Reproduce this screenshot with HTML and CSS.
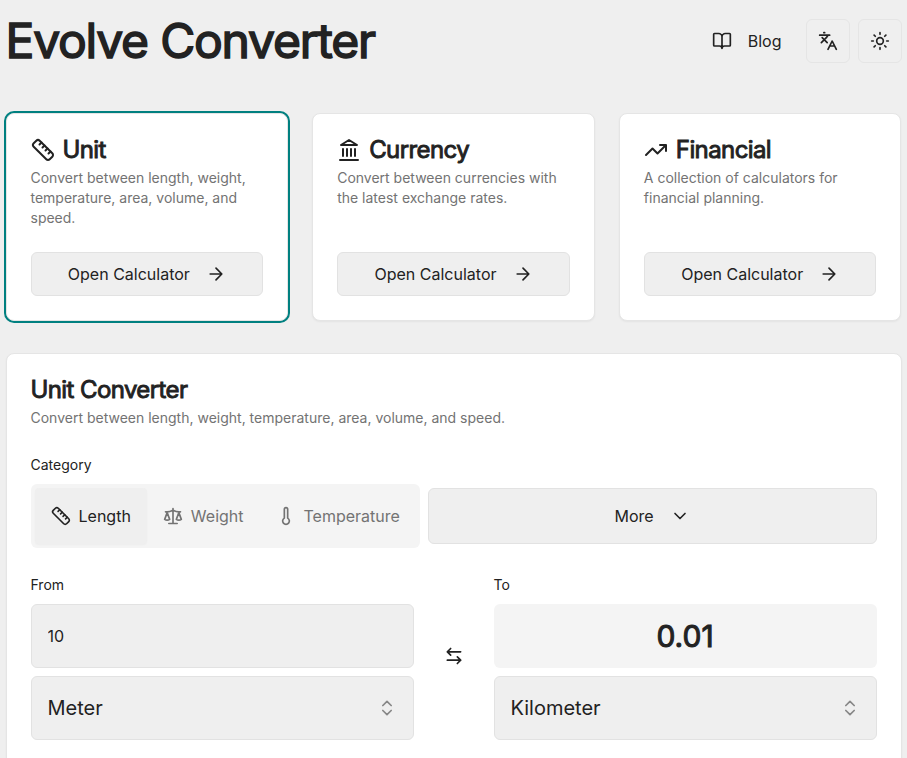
FILE: index.html
```html
<!DOCTYPE html>
<html lang="en">
<head>
    <meta charset="UTF-8">
    <meta name="viewport" content="width=device-width, initial-scale=1.0">
    <title>Evolve Converter</title>
    <link rel="stylesheet" href="styles.css">
</head>
<body>
    <!-- icons, used below with <use> -->
    <svg class="sprite" aria-hidden="true">
        <symbol id="book" viewBox="0 0 24 24">
            <path d="M12 7v14M3 18a1 1 0 0 1-1-1V4a1 1 0 0 1 1-1h5a4 4 0 0 1 4 4 4 4 0 0 1 4-4h5a1 1 0 0 1 1 1v13a1 1 0 0 1-1 1h-6a3 3 0 0 0-3 3 3 3 0 0 0-3-3z"/>
        </symbol>
        <symbol id="languages" viewBox="0 0 24 24">
            <path d="m5 8 6 6M4 14l6-6 2-3M2 5h12M7 2h1M22 22l-5-10-5 10M14 18h6"/>
        </symbol>
        <symbol id="sun" viewBox="0 0 24 24">
            <circle cx="12" cy="12" r="4"/>
            <path d="M12 2v2M12 20v2M4.930 4.930l1.410 1.410M17.660 17.660l1.410 1.410M2 12h2M20 12h2M6.340 17.660l-1.410 1.410M19.070 4.930l-1.410 1.410"/>
        </symbol>
        <symbol id="ruler" viewBox="0 0 24 24">
            <path d="M21.300 15.300a2.400 2.400 0 0 1 0 3.400l-2.600 2.600a2.400 2.400 0 0 1-3.400 0L2.700 8.700a2.410 2.410 0 0 1 0-3.400l2.600-2.600a2.410 2.410 0 0 1 3.400 0Z"/>
            <path d="m14.500 12.500 2-2M11.500 9.500l2-2M8.500 6.500l2-2M17.500 15.500l2-2"/>
        </symbol>
        <symbol id="landmark" viewBox="0 0 24 24">
            <path d="M3 22h18M6 18v-7M10 18v-7M14 18v-7M18 18v-7M12 2l8 5H4z"/>
        </symbol>
        <symbol id="trending" viewBox="0 0 24 24">
            <path d="M22 7l-8.500 8.500-5-5L2 17M16 7h6v6"/>
        </symbol>
        <symbol id="arrow" viewBox="0 0 24 24">
            <path d="M5 12h14M12 5l7 7-7 7"/>
        </symbol>
        <symbol id="scale" viewBox="0 0 24 24">
            <path d="m16 16 3-8 3 8c-.87.65-1.92 1-3 1s-2.130-.35-3-1ZM2 16l3-8 3 8c-.87.65-1.920 1-3 1s-2.130-.35-3-1ZM7 21h10M12 3v18M3 7h2c2 0 5-1 7-2 2 1 5 2 7 2h2"/>
        </symbol>
        <symbol id="thermometer" viewBox="0 0 24 24">
            <path d="M14 4v10.540a4 4 0 1 1-4 0V4a2 2 0 0 1 4 0Z"/>
        </symbol>
        <symbol id="chevron" viewBox="0 0 24 24">
            <path d="m6 9 6 6 6-6"/>
        </symbol>
        <symbol id="updown" viewBox="0 0 24 24">
            <path d="m7 15 5 5 5-5M7 9l5-5 5 5"/>
        </symbol>
        <symbol id="swap" viewBox="0 0 24 24">
            <path d="M8 3 4 7l4 4M4 7h16M16 21l4-4-4-4M20 17H4"/>
        </symbol>
    </svg>

    <div class="container">
        <header class="header">
            <h1>Evolve Converter</h1>
            <nav class="nav">
                <a class="blog" href="#"><svg class="icon"><use href="#book"/></svg>Blog</a>
                <button class="icon-btn" aria-label="Language"><svg class="icon"><use href="#languages"/></svg></button>
                <button class="icon-btn" aria-label="Theme"><svg class="icon"><use href="#sun"/></svg></button>
            </nav>
        </header>

        <section class="cards">
            <div class="card active">
                <h2><svg class="icon"><use href="#ruler"/></svg>Unit</h2>
                <p class="desc">Convert between length, weight, temperature, area, volume, and speed.</p>
                <button class="btn">Open Calculator<svg class="icon"><use href="#arrow"/></svg></button>
            </div>
            <div class="card">
                <h2><svg class="icon"><use href="#landmark"/></svg>Currency</h2>
                <p class="desc">Convert between currencies with the latest exchange rates.</p>
                <button class="btn">Open Calculator<svg class="icon"><use href="#arrow"/></svg></button>
            </div>
            <div class="card">
                <h2><svg class="icon"><use href="#trending"/></svg>Financial</h2>
                <p class="desc">A collection of calculators for financial planning.</p>
                <button class="btn">Open Calculator<svg class="icon"><use href="#arrow"/></svg></button>
            </div>
        </section>

        <main class="card converter">
            <h2>Unit Converter</h2>
            <p class="desc">Convert between length, weight, temperature, area, volume, and speed.</p>

            <label class="label category-label">Category</label>
            <div class="categories">
                <div class="tabs">
                    <button class="tab selected"><svg class="icon"><use href="#ruler"/></svg>Length</button>
                    <button class="tab"><svg class="icon"><use href="#scale"/></svg>Weight</button>
                    <button class="tab"><svg class="icon"><use href="#thermometer"/></svg>Temperature</button>
                </div>
                <button class="btn more">More<svg class="icon"><use href="#chevron"/></svg></button>
            </div>

            <div class="convert">
                <div class="side">
                    <label class="label" for="from">From</label>
                    <input class="field" id="from" type="text" value="10">
                    <button class="field select">Meter<svg class="icon"><use href="#updown"/></svg></button>
                </div>
                <button class="swap" aria-label="Swap"><svg class="icon"><use href="#swap"/></svg></button>
                <div class="side">
                    <label class="label">To</label>
                    <div class="result">0.01</div>
                    <button class="field select">Kilometer<svg class="icon"><use href="#updown"/></svg></button>
                </div>
            </div>
        </main>
    </div>
</body>
</html>
```
FILE: styles.css
```css
* {
    box-sizing: border-box;
}
body {
    margin: 0;
    height: 758px;
    overflow: hidden;
    background: #efefef;
    color: #222;
    font-family: Inter, "Liberation Sans", sans-serif;
    font-size: 16px;
    line-height: 24px;
}
h1, h2, p {
    margin: 0;
}
button, input {
    font: inherit;
    color: inherit;
}
.sprite {
    display: none;
}
.icon {
    width: 20px;
    height: 20px;
    flex: none;
    fill: none;
    stroke: currentColor;
    stroke-width: 2;
    stroke-linecap: round;
    stroke-linejoin: round;
}
.container {
    width: 896px;
    margin: 0 auto;
}

/* header */
.header {
    display: flex;
    justify-content: space-between;
    height: 113px;
    padding-top: 19px;
}
h1 {
    font-size: 48px;
    line-height: 44px;
    font-weight: 400;
    letter-spacing: -0.025em;
    -webkit-text-stroke: 1.5px #222;
}
.nav {
    display: flex;
    gap: 8px;
}
.blog {
    display: flex;
    align-items: center;
    gap: 16px;
    height: 44px;
    padding: 0 16px;
    color: inherit;
    text-decoration: none;
}
.icon-btn {
    display: flex;
    align-items: center;
    justify-content: center;
    width: 44px;
    height: 44px;
    padding: 0;
    background: none;
    border: 1px solid #e5e5e5;
    border-radius: 6px;
}

/* cards */
.cards {
    display: grid;
    grid-template-columns: repeat(3, 1fr);
    gap: 24px;
    height: 208px;
}
.card {
    display: flex;
    flex-direction: column;
    padding: 24px;
    background: #fff;
    border: 1px solid #e5e5e5;
    border-radius: 8px;
    box-shadow: 0 1px 2px rgba(0, 0, 0, 0.05);
}
.card.active {
    box-shadow: 0 0 0 2px #008080;
}
h2 {
    display: flex;
    align-items: center;
    gap: 8px;
    font-size: 24px;
    line-height: 24px;
    font-weight: 400;
    letter-spacing: -0.025em;
    -webkit-text-stroke: 0.9px #222;
}
h2 .icon {
    width: 24px;
    height: 24px;
}
.desc {
    margin-top: 6px;
    color: #737373;
    font-size: 14px;
    line-height: 20px;
}
.btn {
    display: flex;
    align-items: center;
    justify-content: center;
    gap: 16px;
    height: 44px;
    margin-top: auto;
    background: #efefef;
    border: 1px solid #e2e2e2;
    border-radius: 6px;
}

/* converter */
.converter {
    height: 460px;
    margin-top: 32px;
}
.label {
    display: block;
    font-size: 14px;
    line-height: 14px;
}
.category-label {
    margin-top: 30px;
}
.categories {
    display: flex;
    align-items: center;
    gap: 8px;
    margin-top: 12px;
}
.tabs {
    display: flex;
    width: 389px;
    height: 64px;
    padding: 4px;
    background: #f4f4f4;
    border-radius: 6px;
}
.tab {
    display: flex;
    align-items: center;
    gap: 8px;
    padding: 0 16px;
    color: #737373;
    background: none;
    border: 0;
    border-radius: 4px;
}
.tab.selected {
    color: #222;
    background: #efefef;
    box-shadow: 0 1px 2px rgba(0, 0, 0, 0.03);
}
.more {
    flex: 1;
    height: 56px;
    margin: 0;
}
.convert {
    display: grid;
    grid-template-columns: 1fr 80px 1fr;
    margin-top: 30px;
}
.side {
    display: flex;
    flex-direction: column;
    gap: 8px;
}
.side .label {
    margin-bottom: 4px;
}
.field {
    width: 100%;
    height: 64px;
    padding: 0 16px;
    background: #efefef;
    border: 1px solid #e2e2e2;
    border-radius: 6px;
    outline: none;
}
.select {
    display: flex;
    align-items: center;
    justify-content: space-between;
    font-size: 20px;
}
.select .icon {
    opacity: 0.5;
}
.result {
    height: 64px;
    background: #f4f4f4;
    border-radius: 6px;
    font-size: 30px;
    font-weight: 400;
    line-height: 64px;
    text-align: center;
    -webkit-text-stroke: 1px #222;
}
.swap {
    display: flex;
    align-items: center;
    justify-content: center;
    height: 44px;
    margin-top: 56px;
    padding: 0;
    background: none;
    border: 0;
}
```
